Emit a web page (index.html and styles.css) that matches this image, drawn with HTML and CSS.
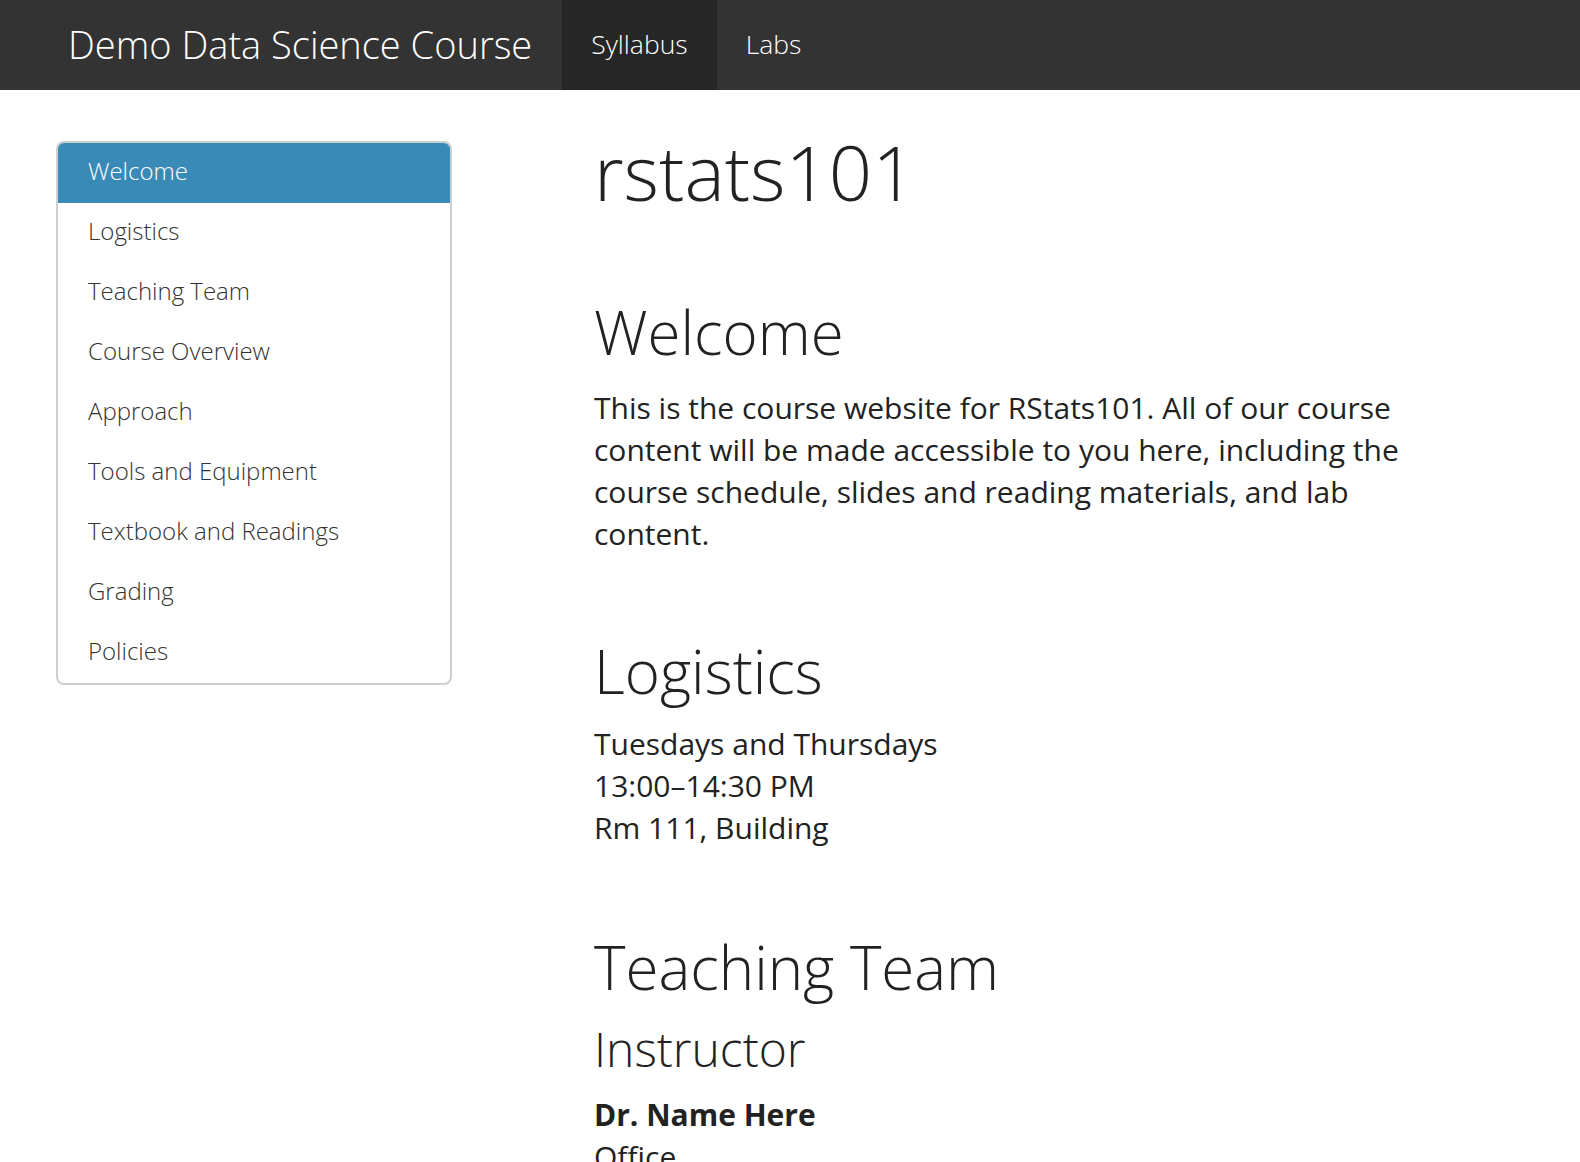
FILE: index.html
```html
<!DOCTYPE html>
<html lang="en">
<head>
<meta charset="utf-8">
<title>Demo Data Science Course</title>
<link rel="stylesheet" href="styles.css">
</head>
<body>
<header class="navbar">
  <a class="brand" href="#">Demo Data Science Course</a>
  <nav class="nav-links">
    <a class="nav-item active" href="#">Syllabus</a>
    <a class="nav-item" href="#">Labs</a>
  </nav>
</header>
<div class="page">
  <aside class="sidebar">
    <ul class="toc">
      <li><a class="toc-item active" href="#welcome">Welcome</a></li>
      <li><a class="toc-item" href="#logistics">Logistics</a></li>
      <li><a class="toc-item" href="#team">Teaching Team</a></li>
      <li><a class="toc-item" href="#overview">Course Overview</a></li>
      <li><a class="toc-item" href="#approach">Approach</a></li>
      <li><a class="toc-item" href="#tools">Tools and Equipment</a></li>
      <li><a class="toc-item" href="#books">Textbook and Readings</a></li>
      <li><a class="toc-item" href="#grading">Grading</a></li>
      <li><a class="toc-item" href="#policies">Policies</a></li>
    </ul>
  </aside>
  <main class="content">
    <h1 class="title">rstats101</h1>
    <section id="welcome" class="section first">
      <h2>Welcome</h2>
      <p class="intro">This is the course website for RStats101. All of our course content will be made accessible to you here, including the course schedule, slides and reading materials, and lab content.</p>
    </section>
    <section id="logistics" class="section">
      <h2>Logistics</h2>
      <p>Tuesdays and Thursdays<br>13:00–14:30 PM<br>Rm 111, Building</p>
    </section>
    <section id="team" class="section team">
      <h2>Teaching Team</h2>
      <h3>Instructor</h3>
      <p class="person"><strong>Dr. Name Here</strong><br>Office</p>
    </section>
  </main>
</div>
</body>
</html>
```
FILE: styles.css
```css
html, body {
  margin: 0;
  padding: 0;
}
body {
  font-family: "Open Sans", "Liberation Sans", sans-serif;
  color: #222;
  background: #fff;
  font-size: 30px;
  line-height: 42px;
  overflow: hidden;
}
a {
  text-decoration: none;
}
.navbar {
  display: flex;
  align-items: stretch;
  height: 90px;
  background: #333333;
}
.brand {
  display: block;
  padding: 0 30px 0 68px;
  font-size: 38px;
  font-weight: 300;
  line-height: 88px;
  color: #fff;
  white-space: nowrap;
}
.nav-links {
  display: flex;
}
.nav-item {
  display: block;
  padding: 0 29px;
  font-size: 26.5px;
  font-weight: 300;
  line-height: 88px;
  color: #fff;
}
.nav-item.active {
  background: #262626;
}
.page {
  display: flex;
  align-items: flex-start;
  padding-left: 56px;
}
.sidebar {
  width: 396px;
  flex: none;
  margin-top: 51px;
}
.toc {
  list-style: none;
  margin: 0;
  padding: 0;
  border: 2px solid #cfcfcf;
  border-radius: 8px;
  overflow: hidden;
}
.toc-item {
  display: block;
  height: 60px;
  box-sizing: border-box;
  padding: 0 30px 4px;
  line-height: 56px;
  font-size: 24px;
  font-weight: 300;
  color: #333;
}
.toc-item.active {
  background: #3a8ab8;
  color: #fff;
}
.content {
  margin-left: 142px;
  flex: 1;
  max-width: 850px;
}
h1, h2, h3 {
  font-weight: 300;
  line-height: 1.1;
  margin: 0;
  color: #222;
}
.title {
  font-size: 76px;
  margin-top: 40px;
}
h2 {
  font-size: 60px;
}
h3 {
  font-size: 48px;
  margin-top: 23px;
}
.section.first {
  margin-top: 85px;
}
.section {
  margin-top: 83px;
}
.section.team {
  margin-top: 85px;
}
p {
  margin: 19px 0 0;
}
p.intro {
  margin-top: 22px;
}
h3 + p {
  margin-top: 19px;
}
strong {
  font-weight: 700;
}
```
